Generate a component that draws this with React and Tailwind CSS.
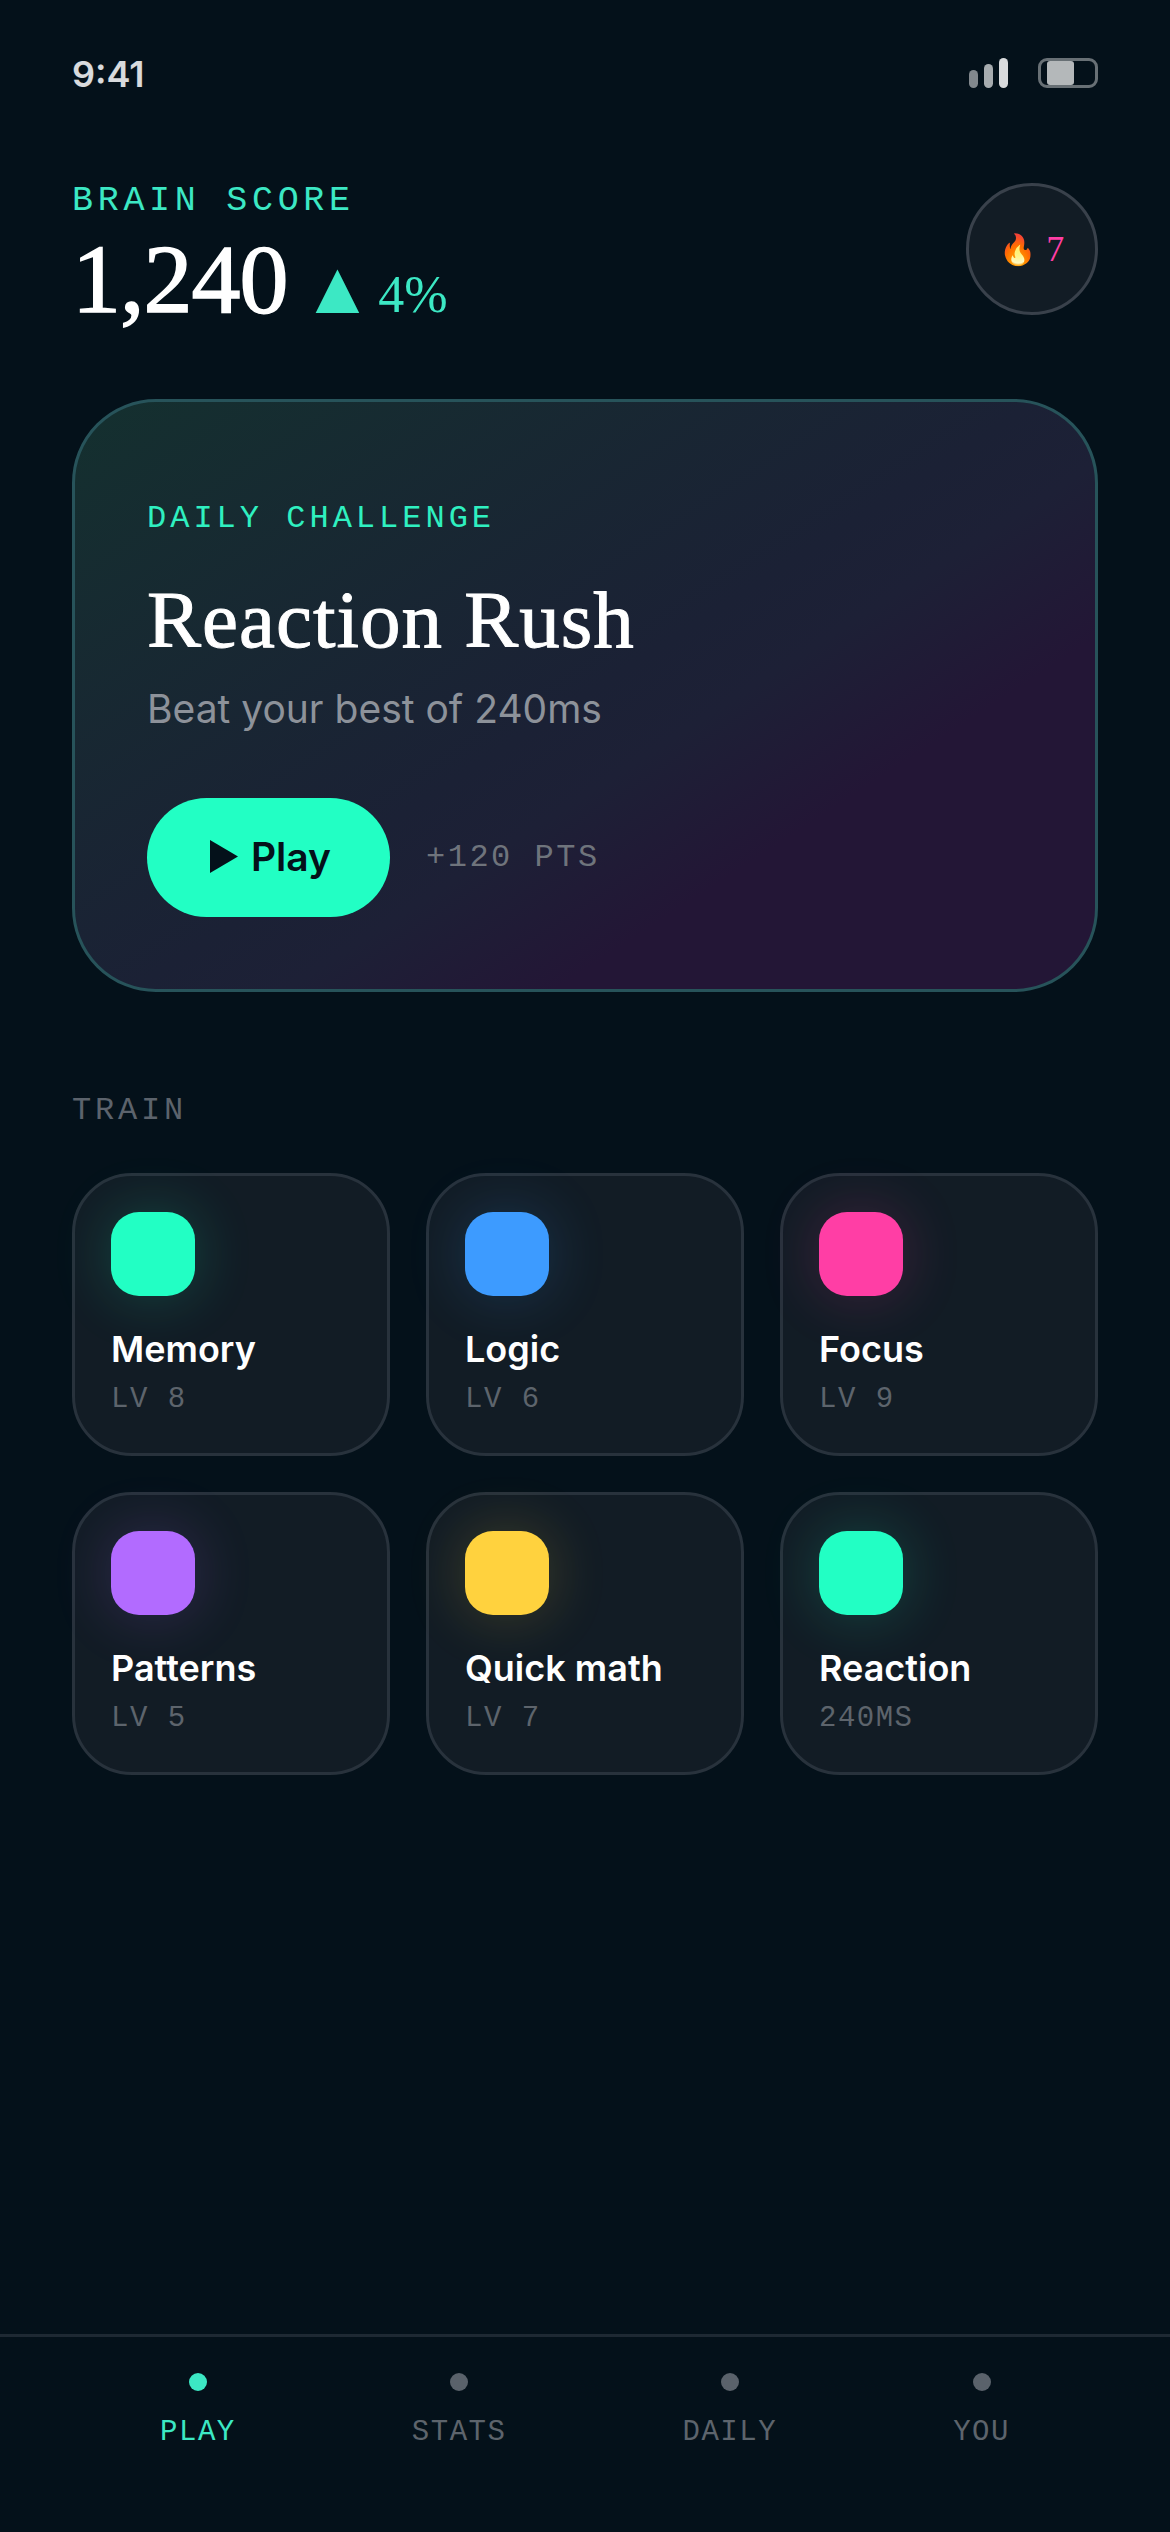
import React from 'react';

const mono = "font-['Liberation_Mono',monospace]";
const serif = "font-['Liberation_Serif',serif]";

const games = [
  { name: 'Memory', meta: 'LV 8', swatch: 'bg-[#22ffc4] shadow-[0_0_60px_rgba(34,255,196,0.2)]' },
  { name: 'Logic', meta: 'LV 6', swatch: 'bg-[#3d9bff] shadow-[0_0_60px_rgba(61,155,255,0.2)]' },
  { name: 'Focus', meta: 'LV 9', swatch: 'bg-[#ff3ea5] shadow-[0_0_60px_rgba(255,62,165,0.2)]' },
  { name: 'Patterns', meta: 'LV 5', swatch: 'bg-[#b26bff] shadow-[0_0_60px_rgba(178,107,255,0.2)]' },
  { name: 'Quick math', meta: 'LV 7', swatch: 'bg-[#ffd23e] shadow-[0_0_60px_rgba(255,210,62,0.2)]' },
  { name: 'Reaction', meta: '240MS', swatch: 'bg-[#22ffc4] shadow-[0_0_60px_rgba(34,255,196,0.2)]' },
];

const tabs = ['PLAY', 'STATS', 'DAILY', 'YOU'];

function StatusBar() {
  return (
    <div className="flex items-center justify-between pt-[56px] h-[92px]">
      <span className="font-['Inter',sans-serif] font-semibold text-[36px] leading-[36px] text-white/85">9:41</span>
      <div className="flex items-end gap-[30px] -mt-[2px]">
        <div className="flex items-end gap-[6px]">
          <div className="w-[9px] h-[18px] rounded-[5px] bg-white/50" />
          <div className="w-[9px] h-[24px] rounded-[5px] bg-white/65" />
          <div className="w-[9px] h-[30px] rounded-[5px] bg-white/85" />
        </div>
        <div className="w-[60px] h-[30px] rounded-[9px] border-[3px] border-white/40 pl-[6px]">
          <div className="w-[27px] h-[24px] rounded-[3px] bg-white/70" />
        </div>
      </div>
    </div>
  );
}

function Header() {
  return (
    <div className="flex items-start justify-between mt-[91px]">
      <div>
        <div className={`${mono} text-[35px] leading-[36px] tracking-[4.7px] text-[#3ce8c4]`}>BRAIN SCORE</div>
        <div className="mt-[12px] h-[96px] leading-[96px] whitespace-nowrap">
          <span className={`${serif} text-[98px] text-white tracking-[-1px] [-webkit-text-stroke:1.5px_white]`}>1,240</span>
          <span className="font-['DejaVu_Sans',sans-serif] text-[57px] text-[#3ce8c4] ml-[28px] align-[6px]">▲</span>
          <span className={`${serif} text-[52px] text-[#3ce8c4] ml-[19px]`}>4%</span>
        </div>
      </div>
      <div className="w-[132px] h-[132px] rounded-full border-[3px] border-[#39414b] bg-[#121c25] flex items-center justify-center gap-[9px]">
        <span className="text-[30px] leading-[36px]">🔥</span>
        <span className={`${serif} text-[36px] leading-[36px] text-[#ff3ea5]`}>7</span>
      </div>
    </div>
  );
}

function ChallengeCard() {
  return (
    <div className="mt-[72px] h-[593px] rounded-[84px] border-[3px] border-[#27535a] bg-[linear-gradient(147deg,#14302f_0%,#1b2135_50%,#1d2036_58%,#231636_72%,#231636_100%)] px-[72px] pt-[99px]">
      <div className={`${mono} text-[32px] leading-[36px] tracking-[4px] text-[#2ff0c0]`}>DAILY CHALLENGE</div>
      <h1 className={`${serif} text-[81px] leading-[84px] tracking-[1px] text-white mt-[41px] [-webkit-text-stroke:1px_white]`}>Reaction Rush</h1>
      <p className="font-['Inter',sans-serif] text-[39px] leading-[48px] text-[#8d929a] mt-[23px]">Beat your best of 240ms</p>
      <div className="flex items-center gap-[36px] mt-[65px]">
        <button className="w-[243px] h-[119px] rounded-full bg-[#22ffc4] flex items-center justify-center gap-[12px] pl-[3px] text-[#04111a] font-['Inter',sans-serif] font-semibold text-[39px]">
          <svg width="30" height="33" viewBox="0 0 30 33" className="-mt-[3px]">
            <path d="M1 0 L29 16.5 L1 33 Z" fill="#04111a" />
          </svg>
          Play
        </button>
        <span className={`${mono} text-[32px] tracking-[2.5px] text-[#6f747c]`}>+120 PTS</span>
      </div>
    </div>
  );
}

function GameTile({ name, meta, swatch }) {
  return (
    <div className="h-[283px] rounded-[60px] border-[3px] border-[#28323c] bg-[#121c25] p-[36px]">
      <div className={`w-[84px] h-[84px] rounded-[28px] ${swatch}`} />
      <div className="font-['Inter',sans-serif] font-semibold text-[36px] leading-[44px] text-white mt-[31px]">{name}</div>
      <div className={`${mono} text-[29px] leading-[32px] tracking-[1.5px] text-[#5d646c] mt-[13px]`}>{meta}</div>
    </div>
  );
}

function BottomNav() {
  return (
    <nav className="mt-auto h-[198px] border-t-[3px] border-[#1e2933] bg-[#04111a] px-[72px] pt-[36px] flex justify-around">
      {tabs.map((tab, i) => (
        <div key={tab} className="flex flex-col items-center gap-[26px]">
          <div className={`w-[18px] h-[18px] rounded-full ${i === 0 ? 'bg-[#3ce8c4]' : 'bg-[#5a626b]'}`} />
          <span className={`${mono} text-[29px] leading-[32px] tracking-[1.5px] ${i === 0 ? 'text-[#3ce8c4]' : 'text-[#5d646c]'}`}>{tab}</span>
        </div>
      ))}
    </nav>
  );
}

export default function App() {
  return (
    <div className="w-[1170px] h-[2532px] bg-[#04111a] flex flex-col overflow-hidden">
      <div className="px-[72px]">
        <StatusBar />
        <Header />
        <ChallengeCard />
        <div className={`${mono} text-[32px] leading-[36px] tracking-[3.8px] text-[#5c636c] mt-[101px]`}>TRAIN</div>
        <div className="grid grid-cols-3 gap-[36px] mt-[44px]">
          {games.map((g) => (
            <GameTile key={g.name} {...g} />
          ))}
        </div>
      </div>
      <BottomNav />
    </div>
  );
}
